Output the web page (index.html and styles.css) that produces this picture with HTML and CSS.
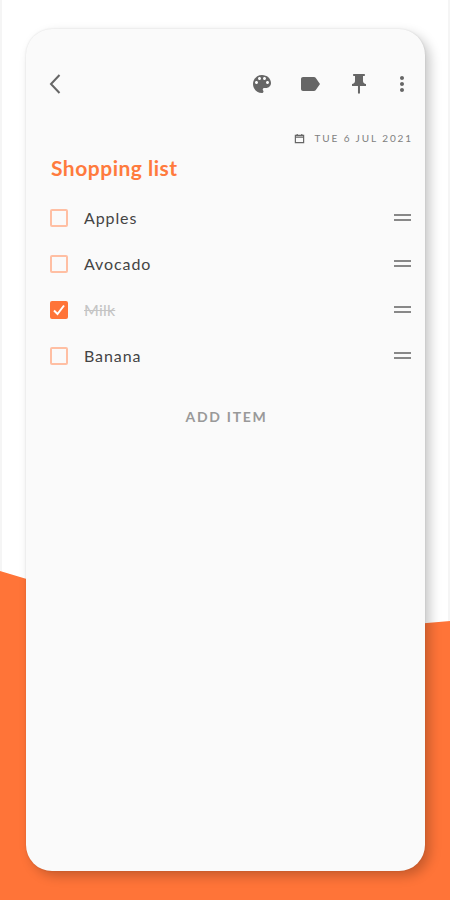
FILE: index.html
```html
<!DOCTYPE html>
<html lang="en">
<head>
	<meta charset="UTF-8">
	<title>Shopping list</title>
	<link rel="stylesheet" href="styles.css">
</head>
<body>
	<div class="page">
		<div class="wave"></div>
		<div class="card">
			<div class="toolbar">
				<svg class="back" viewBox="0 0 12 22"><path d="M10.5 2 2 11l8.5 9"/></svg>
				<div class="actions">
					<svg class="icon palette" viewBox="0 0 24 24"><path d="M12 3c-4.97 0-9 4.03-9 9s4.03 9 9 9c.83 0 1.5-.67 1.5-1.5 0-.39-.15-.74-.39-1.01-.23-.26-.38-.61-.38-.99 0-.83.67-1.5 1.5-1.5H16c2.76 0 5-2.24 5-5 0-4.42-4.03-8-9-8zm-5.5 9c-.83 0-1.5-.67-1.5-1.5S5.67 9 6.5 9 8 9.67 8 10.5 7.33 12 6.5 12zm3-4C8.67 8 8 7.33 8 6.5S8.67 5 9.5 5s1.5.67 1.5 1.5S10.33 8 9.5 8zm5 0c-.83 0-1.5-.67-1.5-1.5S13.67 5 14.5 5s1.5.67 1.5 1.5S15.33 8 14.5 8zm3 4c-.83 0-1.5-.67-1.5-1.5S16.67 9 17.5 9s1.5.67 1.5 1.5-.67 1.5-1.5 1.5z"/></svg>
					<svg class="icon label" viewBox="0 0 24 24"><path d="M17.63 5.84C17.27 5.33 16.67 5 16 5L5 5.01C3.9 5.01 3 5.9 3 7v10c0 1.1.9 1.99 2 1.99L16 19c.67 0 1.27-.33 1.63-.84L22 12l-4.37-6.16z"/></svg>
					<svg class="icon" viewBox="0 0 24 24"><path d="M16 9V4h1c.55 0 1-.45 1-1s-.45-1-1-1H7c-.55 0-1 .45-1 1s.45 1 1 1h1v5c0 1.66-1.34 3-3 3v2h5.97v7l1 1 1-1v-7H19v-2c-1.66 0-3-1.34-3-3z"/></svg>
					<svg class="icon more" viewBox="0 0 24 24"><path d="M12 8c1.1 0 2-.9 2-2s-.9-2-2-2-2 .9-2 2 .9 2 2 2zm0 2c-1.1 0-2 .9-2 2s.9 2 2 2 2-.9 2-2-.9-2-2-2zm0 6c-1.1 0-2 .9-2 2s.9 2 2 2 2-.9 2-2-.9-2-2-2z"/></svg>
				</div>
			</div>
			<div class="date">
				<svg class="cal" viewBox="0 0 12 12"><path d="M1.500 2.500h9v8h-9zM1.500 4.500h9M3.500 1v2M8.500 1v2"/></svg>
				<span>TUE 6 JUL 2021</span>
			</div>
			<h1 class="title">Shopping list</h1>
			<ul class="list">
				<li class="item"><span class="box"></span><span class="name">Apples</span><span class="handle"></span></li>
				<li class="item"><span class="box"></span><span class="name">Avocado</span><span class="handle"></span></li>
				<li class="item done">
					<span class="box"><svg viewBox="0 0 14 14"><path d="M2 7.500 5.500 11 12 2.500"/></svg></span>
					<span class="name">Milk</span><span class="handle"></span>
				</li>
				<li class="item"><span class="box"></span><span class="name">Banana</span><span class="handle"></span></li>
			</ul>
			<div class="add">ADD ITEM</div>
		</div>
	</div>
</body>
</html>
```

FILE: styles.css
```css
body,div,ul,li,h1{margin:0;padding:0;}
ul{list-style-type: none;}
body{
	background: #fff;
	font-family: "Lato", "Open Sans", sans-serif;
}
.page{
	position: relative;
	width: 450px;
	height: 900px;
	padding: 29px 25px 29px 26px;
	box-sizing: border-box;
	overflow: hidden;
	background: #fff;
	box-shadow: inset 2px 0 0 #f5f5f5, inset -2px 0 0 #f5f5f5;
}
.wave{
	position: absolute;
	top: 0;
	left: 0;
	width: 450px;
	height: 900px;
	background: #ff7438;
	clip-path: polygon(0 571px, 230px 640px, 450px 621px, 450px 900px, 0 900px);
}
.card{
	position: relative;
	height: 842px;
	background: #fafafa;
	border-radius: 26px;
	box-shadow: 5px 5px 12px rgba(0,0,0,0.22), 0 0 2px rgba(0,0,0,0.12);
}
.toolbar{
	display: flex;
	align-items: center;
	justify-content: space-between;
	height: 24px;
	padding: 43px 11px 0 23px;
}
.back{
	width: 12px;
	height: 22px;
	fill: none;
	stroke: #666;
	stroke-width: 2;
}
.actions{
	display: flex;
	gap: 24px;
}
.icon{
	width: 24px;
	height: 24px;
	fill: #666;
}
.label{
	margin-left: -1px;
	margin-right: 1px;
}
.palette{
	margin-right: 1px;
}
.more{
	margin-left: -5px;
}
.date{
	display: flex;
	align-items: center;
	justify-content: flex-end;
	gap: 10px;
	margin-top: 36px;
	padding-right: 12px;
	font-size: 10px;
	line-height: 12px;
	letter-spacing: 1.9px;
	color: #808080;
}
.cal{
	width: 11px;
	height: 11px;
	fill: none;
	stroke: #666;
	stroke-width: 1.3;
}
.title{
	margin-top: 11px;
	padding-left: 25px;
	font-size: 21px;
	line-height: 26px;
	font-weight: 700;
	letter-spacing: 0.5px;
	color: #ff7a3d;
}
.list{
	margin-top: 14px;
}
.item{
	display: flex;
	align-items: center;
	height: 46px;
	padding: 0 14px 0 24px;
}
.box{
	display: block;
	width: 14px;
	height: 14px;
	border: 2px solid #ffbfa3;
	border-radius: 2px;
}
.box svg{
	display: block;
	width: 14px;
	height: 14px;
	fill: none;
	stroke: #fff;
	stroke-width: 2;
}
.name{
	flex: 1;
	margin: -2px 0 0 16px;
	font-size: 16px;
	letter-spacing: 0.9px;
	color: #444;
}
.handle{
	width: 17px;
	height: 3px;
	border-top: 2px solid #888;
	border-bottom: 2px solid #888;
	margin-top: -1px;
}
.done .box{
	background: #ff7438;
	border-color: #ff7438;
}
.done .name{
	color: #c4c4c4;
	letter-spacing: 0.2px;
	text-decoration: line-through;
}
.add{
	margin-top: 29px;
	padding-left: 2px;
	text-align: center;
	font-size: 14px;
	line-height: 18px;
	font-weight: 700;
	letter-spacing: 1.7px;
	color: #999;
}
```
